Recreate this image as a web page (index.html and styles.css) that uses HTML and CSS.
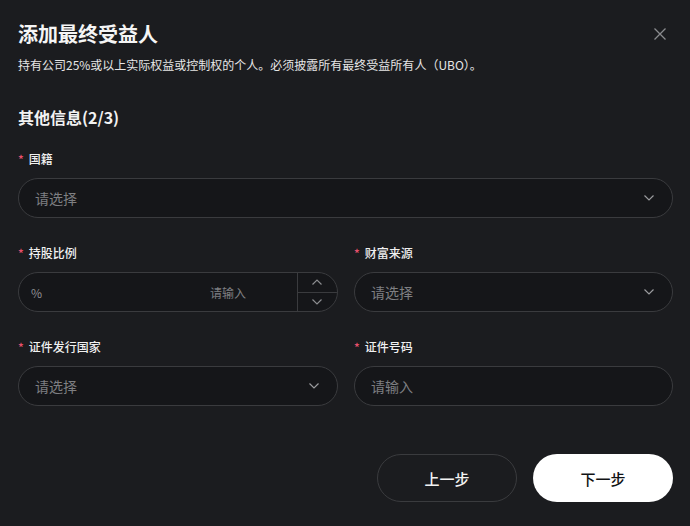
FILE: index.html
```html
<!DOCTYPE html>
<html lang="zh-CN">
<head>
<meta charset="utf-8">
<title>添加最终受益人</title>
<link rel="stylesheet" href="styles.css">
</head>
<body>
<div class="dialog">
  <div class="header">
    <h1 class="title">添加最终受益人</h1>
    <button class="close" aria-label="关闭">
      <svg width="12" height="12" viewBox="0 0 12 12"><path d="M0.5 0.5 L11.5 11.5 M11.5 0.5 L0.5 11.5" stroke="#8a8b8e" stroke-width="1.3" fill="none"/></svg>
    </button>
  </div>
  <p class="subtitle">持有公司25%或以上实际权益或控制权的个人。必须披露所有最终受益所有人（UBO）。</p>
  <h2 class="section">其他信息(2/3)</h2>

  <div class="grid">
    <div class="field full">
      <label class="label"><span class="req">*</span>国籍</label>
      <div class="input select"><span class="ph">请选择</span><svg class="chev" width="10" height="6" viewBox="0 0 10 6"><path d="M0.5 0.5 L5 5 L9.5 0.5" stroke="#9a9b9e" stroke-width="1.2" fill="none"/></svg></div>
    </div>

    <div class="field">
      <label class="label"><span class="req">*</span>持股比例</label>
      <div class="input number">
        <span class="prefix">%</span>
        <span class="ph num-ph">请输入</span>
        <div class="stepper">
          <div class="step"><svg width="10" height="6" viewBox="0 0 10 6"><path d="M0.5 5.5 L5 1 L9.5 5.5" stroke="#8a8b8e" stroke-width="1.2" fill="none"/></svg></div>
          <div class="step down"><svg width="10" height="6" viewBox="0 0 10 6"><path d="M0.5 0.5 L5 5 L9.5 0.5" stroke="#8a8b8e" stroke-width="1.2" fill="none"/></svg></div>
        </div>
      </div>
    </div>

    <div class="field">
      <label class="label"><span class="req">*</span>财富来源</label>
      <div class="input select"><span class="ph">请选择</span><svg class="chev" width="10" height="6" viewBox="0 0 10 6"><path d="M0.5 0.5 L5 5 L9.5 0.5" stroke="#9a9b9e" stroke-width="1.2" fill="none"/></svg></div>
    </div>

    <div class="field">
      <label class="label"><span class="req">*</span>证件发行国家</label>
      <div class="input select"><span class="ph">请选择</span><svg class="chev" width="10" height="6" viewBox="0 0 10 6"><path d="M0.5 0.5 L5 5 L9.5 0.5" stroke="#9a9b9e" stroke-width="1.2" fill="none"/></svg></div>
    </div>

    <div class="field">
      <label class="label"><span class="req">*</span>证件号码</label>
      <div class="input"><span class="ph">请输入</span></div>
    </div>
  </div>

  <div class="actions">
    <button class="btn secondary">上一步</button>
    <button class="btn primary">下一步</button>
  </div>
</div>
</body>
</html>
```

FILE: styles.css
```css
* { box-sizing: border-box; }
html, body {
  margin: 0;
  padding: 0;
  background: #1b1c1f;
}
body {
  font-family: "Noto Sans CJK SC", "Noto Sans", sans-serif;
  color: #f2f2f2;
  width: 690px;
  height: 526px;
  overflow: hidden;
}
.dialog {
  padding: 20px 17px 0 18px;
}
.header {
  display: flex;
  justify-content: space-between;
  align-items: center;
}
.title {
  margin: 0;
  font-size: 20px;
  line-height: 28px;
  font-weight: 700;
  color: #f5f5f5;
}
.close {
  background: none;
  border: 0;
  padding: 0;
  width: 12px;
  height: 12px;
  margin-right: 7px;
  display: flex;
}
.subtitle {
  margin: 8px 0 0;
  font-size: 12px;
  line-height: 18px;
  color: #e6e6e6;
}
.section {
  margin: 31px 0 0;
  font-size: 16px;
  line-height: 24px;
  font-weight: 700;
  color: #f2f2f2;
}
.grid {
  margin-top: 21px;
  display: grid;
  grid-template-columns: 320px 319px;
  column-gap: 16px;
  row-gap: 26px;
}
.full { grid-column: 1 / -1; }
.field {
  display: flex;
  flex-direction: column;
  gap: 10px;
}
.label {
  font-size: 12px;
  line-height: 18px;
  font-weight: 500;
  color: #f0f0f0;
  display: flex;
  align-items: center;
}
.req {
  color: #e8506c;
  margin-right: 5px;
  font-size: 12px;
}
.input {
  height: 40px;
  border: 1px solid #3a3b3e;
  border-radius: 20px;
  background: #151619;
  display: flex;
  align-items: center;
  padding: 0 16px 1px;
  font-size: 14px;
}
.ph { color: #7e7f82; }
.select { justify-content: space-between; padding-right: 18px; }
.chev { display: block; }
.number {
  padding: 0 0 0 12px;
  overflow: hidden;
}
.prefix {
  font-size: 12px;
  color: #8f9093;
}
.num-ph {
  flex: 1;
  text-align: right;
  font-size: 12px;
  padding-right: 51px;
}
.stepper {
  width: 40px;
  height: 100%;
  border-left: 1px solid #3a3b3e;
  display: flex;
  flex-direction: column;
}
.step {
  flex: 1;
  display: flex;
  align-items: center;
  justify-content: center;
  padding-right: 2px;
}
.step.down { border-top: 1px solid #3a3b3e; }
.actions {
  margin-top: 48px;
  display: flex;
  justify-content: flex-end;
  gap: 16px;
}
.btn {
  width: 140px;
  height: 48px;
  border-radius: 24px;
  font-family: "Noto Sans CJK SC", "Noto Sans", sans-serif;
  font-size: 15px;
  font-weight: 500;
}
.secondary {
  background: transparent;
  border: 1px solid #3a3b3e;
  color: #f2f2f2;
}
.primary {
  background: #ffffff;
  border: 0;
  color: #111214;
}
```
